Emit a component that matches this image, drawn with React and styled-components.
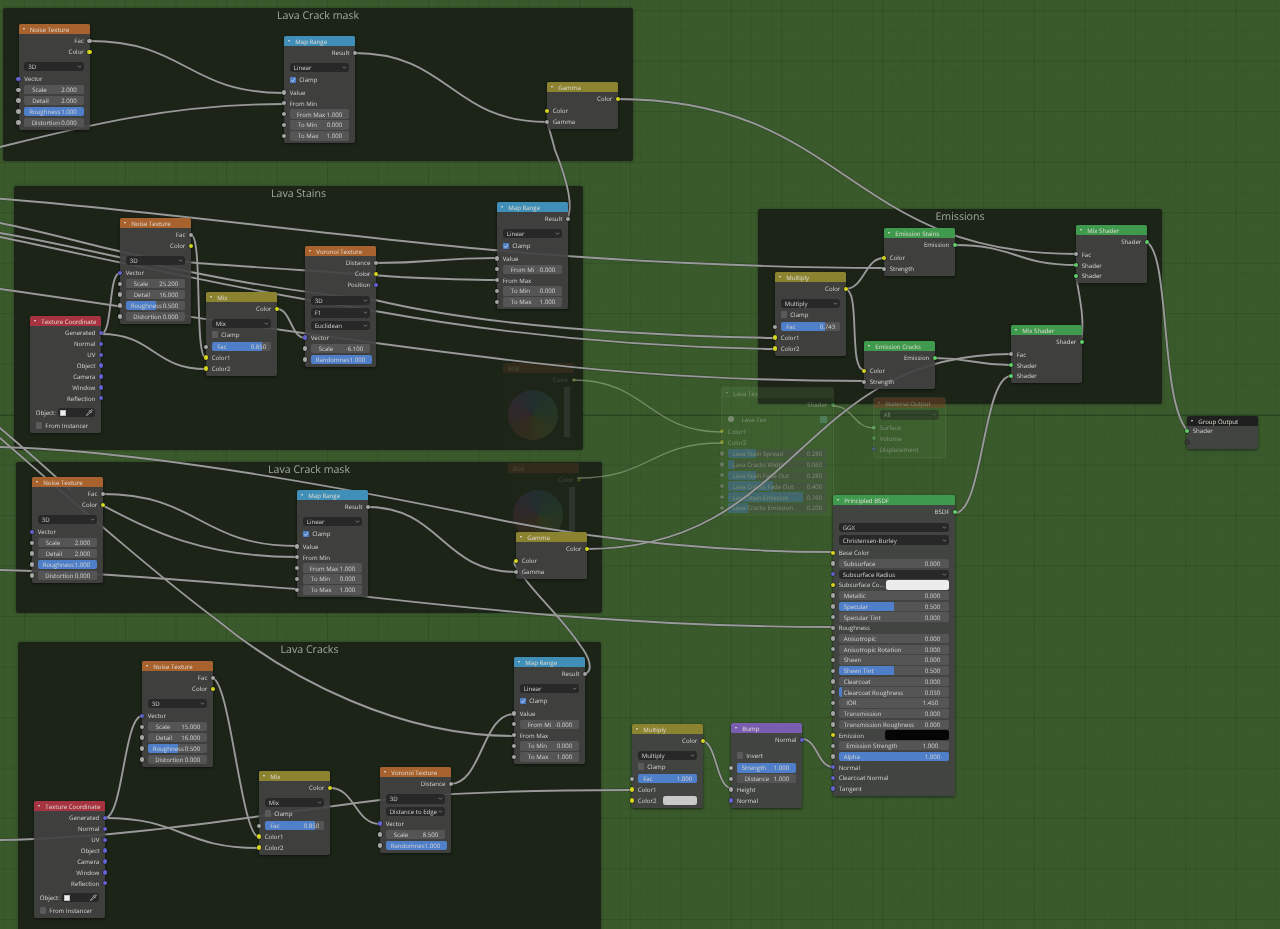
import React from 'react'
import styled, { createGlobalStyle } from 'styled-components'
import { Pipette } from 'lucide-react'

const GlobalStyle = createGlobalStyle`
    html, body {
        margin: 0;
        padding: 0;
        background: #3a5a2c;
        overflow: hidden;
    }
`

const socketColors = {
    grey: '#a6a6a6',
    yellow: '#d6d61e',
    blue: '#6464d0',
    green: '#5fd06a',
    none: '#3a3a3a',
}

const Canvas = styled.div`
    position: relative;
    width: 1280px;
    height: 929px;
    overflow: hidden;
    font-family: 'Open Sans', 'Liberation Sans', sans-serif;
    text-rendering: geometricPrecision;
    filter: blur(0.45px);
    background-color: #3a5a2c;
    background-image:
        linear-gradient(to bottom, rgba(20, 40, 15, 0.4) 1px, transparent 1px),
        linear-gradient(to right, rgba(20, 40, 10, 0.12) 1px, transparent 1px),
        linear-gradient(to bottom, rgba(20, 40, 10, 0.12) 1px, transparent 1px),
        linear-gradient(to right, rgba(20, 40, 10, 0.08) 1px, transparent 1px),
        linear-gradient(to bottom, rgba(20, 40, 10, 0.08) 1px, transparent 1px);
    background-size: 100% 929px, 50.5px 50.5px, 50.5px 50.5px, 10.1px 10.1px, 10.1px 10.1px;
    background-position: 0 415px, 24px 10px, 0 10px, 4px 0.5px, 0 0.5px;
`

const Frame = styled.div`
    position: absolute;
    left: ${(p) => p.$x}px;
    top: ${(p) => p.$y}px;
    width: ${(p) => p.$w}px;
    height: ${(p) => p.$h}px;
    background: rgba(27, 33, 23, 0.94);
    border-radius: 2px;
    box-shadow: 0 0 3px rgba(0, 0, 0, 0.35);
    color: #a4a7a0;
    font-size: 10.6px;
    line-height: 16px;
    text-align: center;
`

const Wires = styled.svg`
    position: absolute;
    left: 0;
    top: 0;
    width: 1280px;
    height: 929px;
    fill: none;
    stroke-linecap: round;
`

const WireCasing = styled.path`
    stroke: rgba(30, 30, 30, 0.35);
    stroke-width: 3;
`

const WireCore = styled.path`
    stroke: #999999;
    stroke-width: 1.9;
`

const GhostWire = styled.path`
    stroke: rgba(190, 205, 170, 0.45);
    stroke-width: 1.3;
`

const Node = styled.div`
    --row: ${(p) => p.$rowH || 10.9}px;
    position: absolute;
    left: ${(p) => p.$x}px;
    top: ${(p) => p.$y}px;
    width: ${(p) => p.$w || 71}px;
    box-sizing: border-box;
    padding-bottom: 2px;
    background: rgba(66, 66, 66, 0.92);
    border-radius: 2px;
    box-shadow: 0 1px 3px rgba(0, 0, 0, 0.55);
    color: #d6d6d6;
    font-size: 6.1px;
    white-space: nowrap;
`

const GhostNode = styled(Node)`
    background: rgba(110, 170, 90, 0.2);
    box-shadow: none;
    opacity: 0.42;
    outline: 1px solid rgba(170, 200, 140, 0.3);
`

const GhostRgb = styled(Node)`
    height: 86px;
    background: rgba(40, 50, 35, 0.4);
    box-shadow: none;
    opacity: 0.2;
`

const Header = styled.div`
    display: flex;
    align-items: center;
    gap: 4.9px;
    height: 10px;
    margin-bottom: 1.5px;
    padding-left: 4.4px;
    background: ${(p) => p.$color};
    border-radius: 2px 2px 0 0;
    color: #e0dad2;
`

const Caret = styled.span`
    width: 0;
    height: 0;
    border-left: 1.6px solid transparent;
    border-right: 1.6px solid transparent;
    border-top: 2.6px solid #e8e8e8;
`

const Row = styled.div`
    position: relative;
    display: flex;
    align-items: center;
    justify-content: ${(p) => (p.$right ? 'flex-end' : 'flex-start')};
    gap: 2px;
    height: var(--row);
    margin-top: ${(p) => p.$mt || 0}px;
    padding: 0 5.7px;
    box-sizing: border-box;
`

const Socket = styled.span`
    position: absolute;
    top: 50%;
    ${(p) => (p.$out ? 'right' : 'left')}: -2.2px;
    width: 4.4px;
    height: 4.4px;
    margin-top: -2.2px;
    border-radius: 50%;
    background: ${(p) => socketColors[p.$kind]};
    box-shadow: 0 0 0 0.5px rgba(0, 0, 0, 0.55);
`

const Field = styled.div`
    flex: 1;
    display: flex;
    align-items: center;
    justify-content: space-between;
    height: 9.4px;
    padding: 0 ${(p) => p.$pr ?? 7}px 0 ${(p) => p.$pl ?? 8}px;
    border-radius: 2px;
    color: #d4d4d4;
    background: linear-gradient(
        to right,
        #4f7fc9 ${(p) => p.$fill || 0}%,
        #555555 ${(p) => p.$fill || 0}%
    );
`

const Select = styled.div`
    flex: 1;
    display: flex;
    align-items: center;
    justify-content: space-between;
    height: 9.4px;
    padding: 0 2px 0 4px;
    border-radius: 3px;
    background: #282828;
    color: #d4d4d4;
`

const Chevron = styled.svg`
    width: 5px;
    height: 5px;
    fill: none;
    stroke: #c8c8c8;
    stroke-width: 1;
`

const Box = styled.span`
    display: flex;
    align-items: center;
    justify-content: center;
    width: 6.6px;
    height: 6.6px;
    margin-right: 1px;
    border-radius: 1px;
    background: ${(p) => (p.$on ? '#4f7fc9' : '#5a5a5a')};
`

const Tick = styled.svg`
    width: 6px;
    height: 6px;
    fill: none;
    stroke: #f0f0f0;
    stroke-width: 1.2;
`

const Swatch = styled.div`
    margin-left: auto;
    width: ${(p) => p.$w}px;
    height: 9.4px;
    border-radius: 2.5px;
    background: ${(p) => p.$color};
`

const ObjectPicker = styled.div`
    flex: 1;
    display: flex;
    align-items: center;
    justify-content: space-between;
    height: 9.4px;
    padding: 0 2px 0 3px;
    border-radius: 3px;
    background: #282828;
    color: #d8d8d8;
`

const Cube = styled.span`
    width: 4.4px;
    height: 4.4px;
    background: #efefef;
    outline: 0.8px dashed #bdbdbd;
`

const GhostBadge = styled.span`
    margin-left: auto;
    width: 7px;
    height: 7px;
    border-radius: 1px;
    background: rgba(120, 190, 170, 0.8);
`

const GhostBall = styled.span`
    width: 6px;
    height: 6px;
    margin-right: 6px;
    border-radius: 50%;
    background: #d0d0d0;
`

const Wheel = styled.div`
    width: 50px;
    height: 50px;
    margin: 5px 0 0 5px;
    border-radius: 50%;
    background: conic-gradient(#3a5a88, #3a7a5a, #7a7a3a, #8a4a3a, #7a3a7a, #3a5a88);
`

const WheelBar = styled.div`
    position: absolute;
    right: 4px;
    top: 24px;
    width: 6px;
    height: 50px;
    background: #777;
`

const check = (label, on, mt) => ({ type: 'check', label, on, mt })
const out = (label, socket = 'grey') => ({ type: 'out', label, socket })
const inp = (label, socket = 'grey', mt) => ({ type: 'in', label, socket, mt })
const val = (label, value, opts = {}) => ({ type: 'val', label, value, ...opts })
const sel = (label, opts = {}) => ({ type: 'sel', label, ...opts })
const swatch = (label, color, w) => ({ type: 'swatch', label, color, w })

const FIRST_SEL = 3.7
const AFTER_SEL = 1.5

const noiseRows = (scale, detail, roughness, distortion, fill) => [
    out('Fac'),
    out('Color', 'yellow'),
    sel('3D', { mt: FIRST_SEL }),
    inp('Vector', 'blue', AFTER_SEL),
    val('Scale', scale),
    val('Detail', detail),
    val('Roughness', roughness, { fill, pl: 5 }),
    val('Distortion', distortion, { pl: 7.5 }),
]

const mapRangeTop = [out('Result'), sel('Linear', { mt: FIRST_SEL }), check('Clamp', true, AFTER_SEL)]

const gammaRows = [out('Color', 'yellow'), inp('Color', 'yellow', 1), inp('Gamma')]

const mixRows = (mode, facLabel, fac, fill) => [
    out('Color', 'yellow'),
    sel(mode, { mt: FIRST_SEL }),
    check('Clamp', false),
    val(facLabel, fac, { fill, mt: 1.4, pl: 5.5, pr: 5 }),
    inp('Color1', 'yellow'),
]

const texCoordRows = [
    out('Generated', 'blue'),
    out('Normal', 'blue'),
    out('UV', 'blue'),
    out('Object', 'blue'),
    out('Camera', 'blue'),
    out('Window', 'blue'),
    out('Reflection', 'blue'),
    { type: 'object' },
    check('From Instancer', false, 1.8),
]

const emissionRows = [out('Emission', 'green'), inp('Color', 'yellow', 2), inp('Strength')]
const mixShaderRows = [out('Shader', 'green'), inp('Fac', 'grey', 1.3), inp('Shader', 'green'), inp('Shader', 'green')]

const principledRows = [
    out('BSDF', 'green'),
    sel('GGX', { mt: 4.9 }),
    sel('Christensen-Burley', { mt: 2 }),
    inp('Base Color', 'yellow', 1.9),
    val('Subsurface', '0.000', { pl: 5, pr: 9 }),
    sel('Subsurface Radius', { socket: 'blue' }),
    swatch('Subsurface Co...', '#ececec', 64),
    val('Metallic', '0.000', { pl: 5, pr: 9 }),
    val('Specular', '0.500', { fill: 50, pl: 5, pr: 9 }),
    val('Specular Tint', '0.000', { pl: 5, pr: 9 }),
    inp('Roughness'),
    val('Anisotropic', '0.000', { pl: 5, pr: 9 }),
    val('Anisotropic Rotation', '0.000', { pl: 5, pr: 9 }),
    val('Sheen', '0.000', { pl: 5, pr: 9 }),
    val('Sheen Tint', '0.500', { fill: 50, pl: 5, pr: 9 }),
    val('Clearcoat', '0.000', { pl: 5, pr: 9 }),
    val('Clearcoat Roughness', '0.030', { fill: 3, pl: 5, pr: 9 }),
    val('IOR', '1.450', { pl: 7.5, pr: 11 }),
    val('Transmission', '0.000', { pl: 5, pr: 9 }),
    val('Transmission Roughness', '0.000', { pl: 5, pr: 9 }),
    swatch('Emission', '#050505', 64),
    val('Emission Strength', '1.000', { pl: 7.5, pr: 11 }),
    val('Alpha', '1.000', { fill: 100, pl: 5, pr: 9 }),
    inp('Normal', 'blue'),
    inp('Clearcoat Normal', 'blue'),
    inp('Tangent', 'blue'),
]

const ORANGE = '#a8622e'
const BLUE = '#3f8fb8'
const OLIVE = '#8b8330'
const RED = '#a6333f'
const GREEN = '#3f9a4d'
const PURPLE = '#7a5db0'
const DARK = '#1f1f1f'

const nodes = [
    { x: 18.5, y: 24, title: 'Noise Texture', color: ORANGE, rows: noiseRows('2.000', '2.000', '1.000', '0.000', 100) },
    {
        x: 284, y: 36, title: 'Map Range', color: BLUE, rows: [
            ...mapRangeTop, inp('Value', 'grey', AFTER_SEL), inp('From Min'),
            val('From Max', '1.000', { pl: 7 }), val('To Min', '0.000'), val('To Max', '1.000'),
        ],
    },
    { x: 547, y: 82, title: 'Gamma', color: OLIVE, rows: gammaRows },

    { x: 120, y: 218, title: 'Noise Texture', color: ORANGE, rows: noiseRows('25.200', '16.000', '0.500', '0.000', 50) },
    { x: 30, y: 316, title: 'Texture Coordinate', color: RED, rows: texCoordRows },
    { x: 206, y: 292, title: 'Mix', color: OLIVE, rows: [...mixRows('Mix', 'Fac', '0.850', 85), inp('Color2', 'yellow')] },
    {
        x: 305, y: 246, title: 'Voronoi Texture', color: ORANGE, rows: [
            out('Distance'), out('Color', 'yellow'), out('Position', 'blue'),
            sel('3D', { mt: 4.8 }), sel('F1', { mt: AFTER_SEL }), sel('Euclidean', { mt: AFTER_SEL }),
            inp('Vector', 'blue', AFTER_SEL), val('Scale', '-6.100'),
            val('Randomnes', '1.000', { fill: 100, pl: 5 }),
        ],
    },
    {
        x: 497, y: 202, title: 'Map Range', color: BLUE, rows: [
            ...mapRangeTop, inp('Value', 'grey', AFTER_SEL), val('From Mi', '-0.000'),
            inp('From Max'), val('To Min', '-0.000'), val('To Max', '1.000'),
        ],
    },

    { x: 775, y: 272, title: 'Multiply', color: OLIVE, rows: [...mixRows('Multiply', 'Fac', '0.743', 74.3), inp('Color2', 'yellow')] },
    { x: 884, y: 228, title: 'Emission Stains', color: GREEN, rows: emissionRows },
    { x: 864, y: 341, title: 'Emission Cracks', color: GREEN, rows: emissionRows },
    { x: 1076, y: 225, title: 'Mix Shader', color: GREEN, rows: mixShaderRows },
    { x: 1011, y: 325, title: 'Mix Shader', color: GREEN, rows: mixShaderRows },
    { x: 1187, y: 416, title: 'Group Output', color: DARK, rows: [inp('Shader', 'green', -2), inp('', 'none')] },

    { x: 32, y: 477, title: 'Noise Texture', color: ORANGE, rows: noiseRows('2.000', '2.000', '1.000', '0.000', 100) },
    {
        x: 297, y: 490, title: 'Map Range', color: BLUE, rows: [
            ...mapRangeTop, inp('Value', 'grey', AFTER_SEL), inp('From Min'),
            val('From Max', '1.000', { pl: 7 }), val('To Min', '0.000'), val('To Max', '1.000'),
        ],
    },
    { x: 516, y: 532, title: 'Gamma', color: OLIVE, rows: gammaRows },

    { x: 142, y: 661, title: 'Noise Texture', color: ORANGE, rows: noiseRows('15.000', '16.000', '0.500', '0.000', 50) },
    { x: 259, y: 771, title: 'Mix', color: OLIVE, rows: [...mixRows('Mix', 'Fac', '0.850', 85), inp('Color2', 'yellow')] },
    {
        x: 380, y: 767, title: 'Voronoi Texture', color: ORANGE, rows: [
            out('Distance'), sel('3D', { mt: 4 }), sel('Distance to Edge', { mt: AFTER_SEL }),
            inp('Vector', 'blue', AFTER_SEL), val('Scale', '8.500'),
            val('Randomnes', '1.000', { fill: 100, pl: 5 }),
        ],
    },
    {
        x: 514, y: 657, title: 'Map Range', color: BLUE, rows: [
            ...mapRangeTop, inp('Value', 'grey', AFTER_SEL), val('From Mi', '-0.000'),
            inp('From Max'), val('To Min', '0.000'), val('To Max', '1.000'),
        ],
    },
    { x: 34, y: 801, title: 'Texture Coordinate', color: RED, rows: texCoordRows },

    { x: 632, y: 724, title: 'Multiply', color: OLIVE, rows: [...mixRows('Multiply', 'Fac', '1.000', 100), swatch('Color2', '#c9c9c9', 34)] },
    {
        x: 731, y: 723, title: 'Bump', color: PURPLE, rows: [
            out('Normal', 'blue'), check('Invert', false, 4.6),
            val('Strength', '1.000', { fill: 100, mt: 1.5, pl: 5 }), val('Distance', '1.000'),
            inp('Height'), inp('Normal', 'blue'),
        ],
    },
    { x: 833, y: 495, w: 122, rowH: 10.72, title: 'Principled BSDF', color: GREEN, rows: principledRows },
]

const link = (x1, y1, x2, y2, d) => {
    const h = d ?? Math.abs(x2 - x1) * 0.5
    return `M${x1},${y1} C${x1 + h},${y1} ${x2 - h},${y2} ${x2},${y2}`
}

const wires = [
    // top crack mask
    link(89, 41, 284, 93),
    'M0,147 C80,127 170,104 284,104',
    link(354, 53, 547, 122),
    link(617, 99, 1076, 254),
    'M567,219 C575,205 565,175 555,150 C551,135 549,128 547,122',

    // lava stains
    'M-10,198 C130,208 300,232 493,250 C600,260 760,268 884,268',
    'M0,223 C70,237 130,258 185,262 C260,268 340,272 400,277 C440,279 470,280 496,280',
    'M0,233 C100,250 220,285 375,300 C480,325 620,335 775,338',
    'M0,237 C120,262 240,290 375,311 C480,330 620,347 775,349',
    'M0,289 C150,310 300,335 493,358 C600,372 730,381 864,381',
    link(375, 263, 496, 258),
    link(191, 235, 206, 358, 12),
    link(101, 334, 120, 273, 12),
    link(101, 334, 206, 369),
    link(277, 309, 305, 338),

    // emissions
    link(845, 289, 884, 258),
    link(845, 289, 864, 370, 16),
    link(955, 245, 1076, 265),
    link(934, 358, 1011, 365),
    'M1081,342 C1085,320 1080,300 1076,276',
    'M1146,242 C1170,250 1160,400 1187,430',
    link(955, 513, 1011, 376, 28),

    // lower crack mask
    'M0,447 C120,450 300,478 500,520 C610,542 730,552 833,552',
    link(102, 494, 297, 546),
    'M102,505 C150,530 200,557 297,557',
    link(367, 507, 516, 572),
    'M0,570 C100,572 200,582 297,589 C400,600 600,627 833,627',
    link(586, 549, 1011, 354),
    'M584,674 C594,672 590,658 580,645 C560,615 535,595 520,572 C515,566 513,563 515,561',
    'M0,428 C20,445 40,462 70,490',
    'M0,438 C60,490 150,570 217,620 C290,680 400,736 514,736',

    // lava cracks
    link(212, 678, 259, 837, 18),
    link(105, 818, 142, 716, 18),
    link(105, 818, 259, 848),
    link(330, 788, 380, 824),
    link(450, 784, 514, 714),
    'M0,840 C130,838 260,815 380,800 C450,792 540,790 632,790',
    link(702, 741, 731, 788),
    link(802, 739, 833, 767),
]

const ghostWires = [
    link(573, 380, 722, 432),
    link(578, 478, 722, 443),
    link(833, 406, 874, 428),
]

const ghostFields = [
    ['Lava Stain Spread', '0.280', 28],
    ['Lava Cracks Width', '0.060', 6],
    ['Lava Stain Fade Out', '0.280', 28],
    ['Lava Cracks Fade Out', '0.400', 45],
    ['Lava Stain Emission', '0.760', 76],
    ['Lava Cracks Emission', '0.200', 20],
]

const ChevronIcon = () => (
    <Chevron viewBox="0 0 10 10">
        <path d="M2 3.5 L5 6.5 L8 3.5" />
    </Chevron>
)

const NodeRow = ({ row }) => {
    switch (row.type) {
        case 'out':
            return <Row $right>{row.label}<Socket $out $kind={row.socket} /></Row>
        case 'in':
            return <Row $mt={row.mt}><Socket $kind={row.socket} />{row.label}</Row>
        case 'val':
            return (
                <Row $mt={row.mt}>
                    <Socket $kind="grey" />
                    <Field $fill={row.fill} $pl={row.pl} $pr={row.pr}>
                        <span>{row.label}</span>
                        <span>{row.value}</span>
                    </Field>
                </Row>
            )
        case 'sel':
            return (
                <Row $mt={row.mt}>
                    {row.socket && <Socket $kind={row.socket} />}
                    <Select>{row.label}<ChevronIcon /></Select>
                </Row>
            )
        case 'check':
            return (
                <Row $mt={row.mt}>
                    <Box $on={row.on}>
                        {row.on && (
                            <Tick viewBox="0 0 10 10">
                                <path d="M2 5.5 L4.2 7.8 L8 2.5" />
                            </Tick>
                        )}
                    </Box>
                    {row.label}
                </Row>
            )
        case 'swatch':
            return (
                <Row>
                    <Socket $kind="yellow" />
                    {row.label}
                    <Swatch $color={row.color} $w={row.w} />
                </Row>
            )
        case 'object':
            return (
                <Row $mt={3.6}>
                    Object:
                    <ObjectPicker>
                        <Cube />
                        <Pipette size={7} strokeWidth={2} />
                    </ObjectPicker>
                </Row>
            )
        default:
            return <Row />
    }
}

const App = () => {
    return (
        <Canvas>
            <GlobalStyle />
            <Frame $x={3} $y={8} $w={630} $h={153}>Lava Crack mask</Frame>
            <Frame $x={14} $y={186} $w={569} $h={264}>Lava Stains</Frame>
            <Frame $x={758} $y={209} $w={404} $h={195}>Emissions</Frame>
            <Frame $x={16} $y={462} $w={586} $h={151}>Lava Crack mask</Frame>
            <Frame $x={18} $y={642} $w={583} $h={300}>Lava Cracks</Frame>

            <GhostRgb $x={503} $y={363}>
                <Header $color="#8a4a2a">RGB</Header>
                <Row $right>Color<Socket $out $kind="yellow" /></Row>
                <Wheel />
                <WheelBar />
            </GhostRgb>
            <GhostRgb $x={508} $y={463}>
                <Header $color="#8a4a2a">RGB</Header>
                <Row $right>Color<Socket $out $kind="yellow" /></Row>
                <Wheel />
                <WheelBar />
            </GhostRgb>
            <GhostNode $x={722} $y={388} $w={111}>
                <Header $color="rgba(80, 130, 70, 0.5)"><Caret />Lava Tex</Header>
                <Row $right $mt={1.5}>Shader<Socket $out $kind="green" /></Row>
                <Row $mt={3.5}><GhostBall />Lava Tex<GhostBadge /></Row>
                <Row $mt={1}><Socket $kind="yellow" />Color1</Row>
                <Row><Socket $kind="yellow" />Color2</Row>
                {ghostFields.map(([label, value, fill], i) => (
                    <Row key={label} $mt={i ? 0 : 0.5}>
                        <Socket $kind="grey" />
                        <Field $fill={fill} $pl={5} $pr={5}>
                            <span>{label}</span>
                            <span>{value}</span>
                        </Field>
                    </Row>
                ))}
            </GhostNode>
            <GhostNode $x={874} $y={398}>
                <Header $color="#8a4a2a"><Caret />Material Output</Header>
                <Row $mt={1}><Select>All<ChevronIcon /></Select></Row>
                <Row $mt={1.5}><Socket $kind="green" />Surface</Row>
                <Row><Socket $kind="green" />Volume</Row>
                <Row><Socket $kind="blue" />Displacement</Row>
            </GhostNode>

            <Wires viewBox="0 0 1280 929">
                {ghostWires.map((d) => <GhostWire key={d} d={d} />)}
                {wires.map((d) => <WireCasing key={d} d={d} />)}
                {wires.map((d) => <WireCore key={d} d={d} />)}
            </Wires>

            {nodes.map((n, i) => (
                <Node key={i} $x={n.x} $y={n.y} $w={n.w} $rowH={n.rowH}>
                    <Header $color={n.color}><Caret />{n.title}</Header>
                    {n.rows.map((row, j) => <NodeRow key={j} row={row} />)}
                </Node>
            ))}
        </Canvas>
    )
}

export default App
